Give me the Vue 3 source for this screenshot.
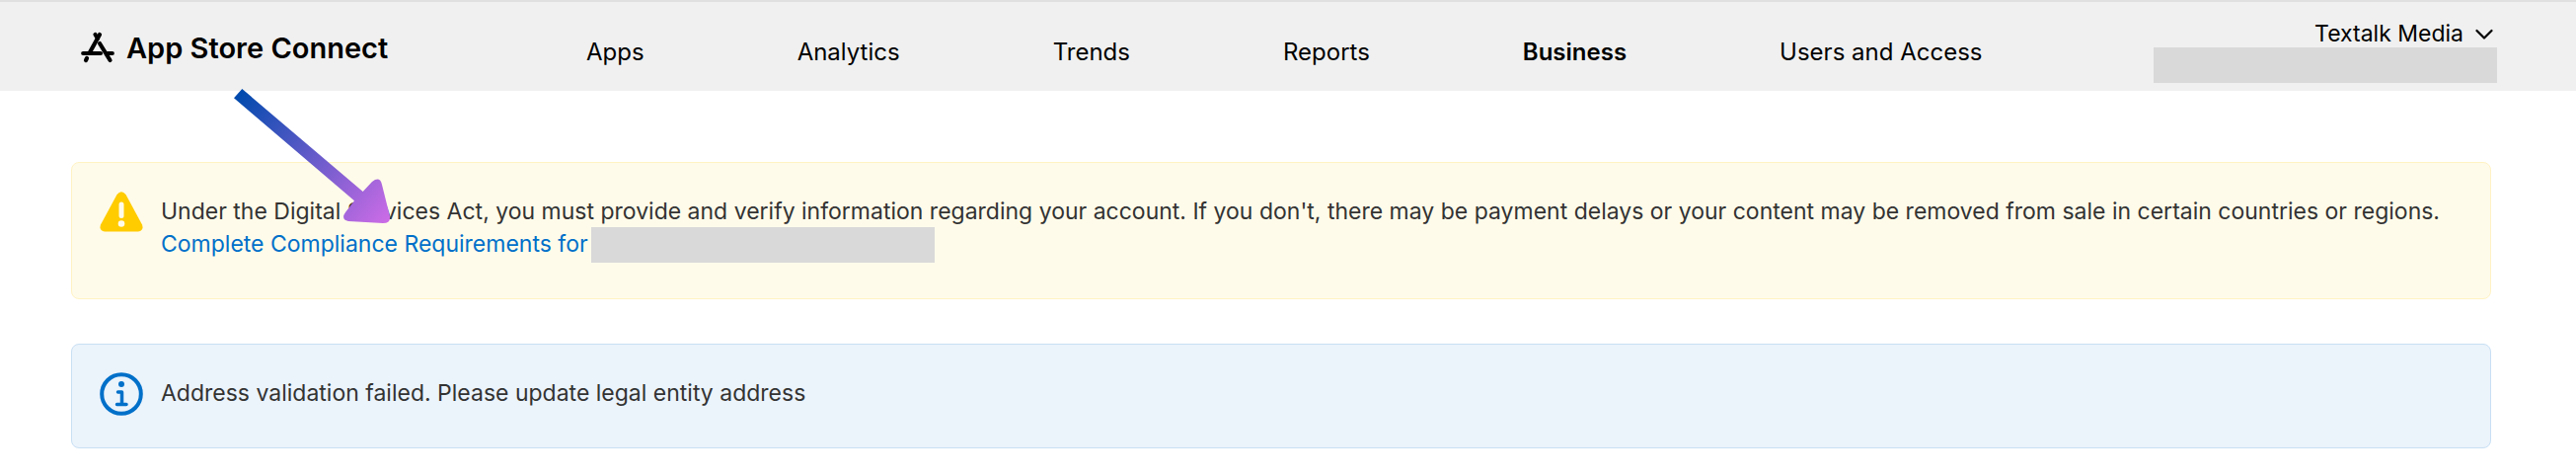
<script setup>
const links = [
  { label: 'Apps' },
  { label: 'Analytics' },
  { label: 'Trends' },
  { label: 'Reports' },
  { label: 'Business', current: true },
  { label: 'Users and Access' },
]
</script>

<template>
  <div class="page">
    <header class="header">
      <a class="brand" href="#">
        <svg class="brand-icon" viewBox="0 0 34 32" aria-hidden="true">
          <g fill="none" stroke="#000" stroke-width="4.200" stroke-linecap="round">
            <path d="M19 3L9 21" />
            <path d="M14.500 3L17 7" />
            <path d="M19 12L29.500 29" />
            <path d="M2.200 22H20" />
            <path d="M27 22H31.800" />
            <path d="M6 27L5 29" />
          </g>
        </svg>
        <span>App Store Connect</span>
      </a>
      <nav class="nav" aria-label="Main">
        <a
          v-for="link in links"
          :key="link.label"
          href="#"
          class="nav-link"
          :class="{ current: link.current }"
          :aria-current="link.current ? 'page' : null"
        >{{ link.label }}</a>
      </nav>
      <div class="account">
        <button class="account-button" type="button">
          Textalk Media
          <svg class="chevron" viewBox="0 0 18 12" aria-hidden="true">
            <path d="M1.500 2L9 9.500L16.500 2" fill="none" stroke="#000" stroke-width="2.200" stroke-linecap="round" stroke-linejoin="round" />
          </svg>
        </button>
        <span class="redacted"></span>
      </div>
    </header>

    <main class="content">
      <section class="alert warning">
        <svg class="alert-icon" viewBox="0 0 44 44" aria-hidden="true">
          <path d="M17.500 4Q22 -1.500 26.500 4L43 34.500Q45 40.500 39 41.500H5Q-1 40.500 1 34.500Z" fill="#fc0" />
          <path d="M22 14V25.500" stroke="#fffbea" stroke-width="5" stroke-linecap="round" />
          <circle cx="22" cy="33.500" r="3.300" fill="#fffbea" />
        </svg>
        <div class="alert-text">
          <p>Under the Digital Services Act, you must provide and verify information regarding your account. If you don't, there may be payment delays or your content may be removed from sale in certain countries or regions.</p>
          <p class="action"><a href="#">Complete Compliance Requirements for</a><span class="redacted"></span></p>
        </div>
      </section>

      <section class="alert info">
        <svg class="alert-icon" viewBox="0 0 44 44" aria-hidden="true">
          <circle cx="22" cy="22" r="19.800" fill="none" stroke="#0070c9" stroke-width="4" />
          <circle cx="22" cy="12" r="3" fill="#0070c9" />
          <path d="M18.500 20H22.500V32M17.500 32.500H27" fill="none" stroke="#0070c9" stroke-width="3.500" stroke-linecap="round" stroke-linejoin="round" />
        </svg>
        <div class="alert-text">
          <p>Address validation failed. Please update legal entity address</p>
        </div>
      </section>
    </main>

    <svg class="pointer" viewBox="0 0 160 138" aria-hidden="true">
      <defs>
        <linearGradient id="pointer-fill" gradientUnits="userSpaceOnUse" x1="5" y1="5" x2="157" y2="134">
          <stop offset="0" stop-color="#004aad" />
          <stop offset="1" stop-color="#cb6ce6" />
        </linearGradient>
      </defs>
      <path fill="url(#pointer-fill)" d="M9.300 0L131.700 104L141 94Q149 88 151 97L159 129Q160 136 152 136L117 134Q109 132 114 125L123 113.300L1 9.300Z" />
    </svg>
  </div>
</template>

<style>
body {
  margin: 0;
  background: #fff;
}
</style>

<style scoped>
.page {
  position: relative;
  font-family: Inter, "Liberation Sans", sans-serif;
  font-size: 23px;
  line-height: 33px;
  color: #333;
}
.header {
  display: flex;
  box-sizing: border-box;
  height: 92px;
  padding: 0 80px 0 82px;
  border-top: 2px solid #e0e0e0;
  background: #f0f0f0;
  color: #000;
}
a {
  color: inherit;
  text-decoration: none;
}
.brand {
  display: flex;
  align-items: center;
  gap: 12px;
  width: 512px;
  padding-top: 2px;
  font-size: 29px;
  font-weight: 600;
  white-space: nowrap;
}
.brand-icon {
  width: 34px;
  height: 32px;
}
.nav {
  display: flex;
  align-items: center;
  gap: 155px;
  padding-top: 10px;
  font-size: 24px;
  white-space: nowrap;
}
.current {
  font-weight: 600;
}
.account {
  display: flex;
  flex-direction: column;
  align-items: flex-end;
  margin-left: auto;
  padding-top: 19px;
}
.account-button {
  display: flex;
  align-items: center;
  gap: 12px;
  padding: 0 4px 0 0;
  border: 0;
  background: none;
  color: #000;
  font: inherit;
  line-height: 27px;
}
.chevron {
  width: 18px;
  height: 12px;
}
.redacted {
  flex: none;
  width: 348px;
  height: 36px;
  background: #d9d9d9;
}
.content {
  display: grid;
  gap: 45px;
  padding: 72px 86px 28px 72px;
}
.alert {
  display: flex;
  gap: 18px;
  padding: 28px 28px 32px;
  border: 1px solid;
  border-radius: 8px;
}
.warning {
  padding-bottom: 38px;
  border-color: #fff3c4;
  background: #fffbea;
}
.info {
  border-color: #c8e0f4;
  background: #ebf3fb;
}
.alert-icon {
  flex: none;
  width: 44px;
  height: 44px;
}
.alert-text {
  padding-top: 5px;
}
p {
  margin: 0;
}
.action {
  display: flex;
  align-items: center;
  gap: 3px;
  height: 33px;
  color: #0070c9;
}
.pointer {
  position: absolute;
  top: 90px;
  left: 236px;
  width: 160px;
  height: 138px;
}
</style>
